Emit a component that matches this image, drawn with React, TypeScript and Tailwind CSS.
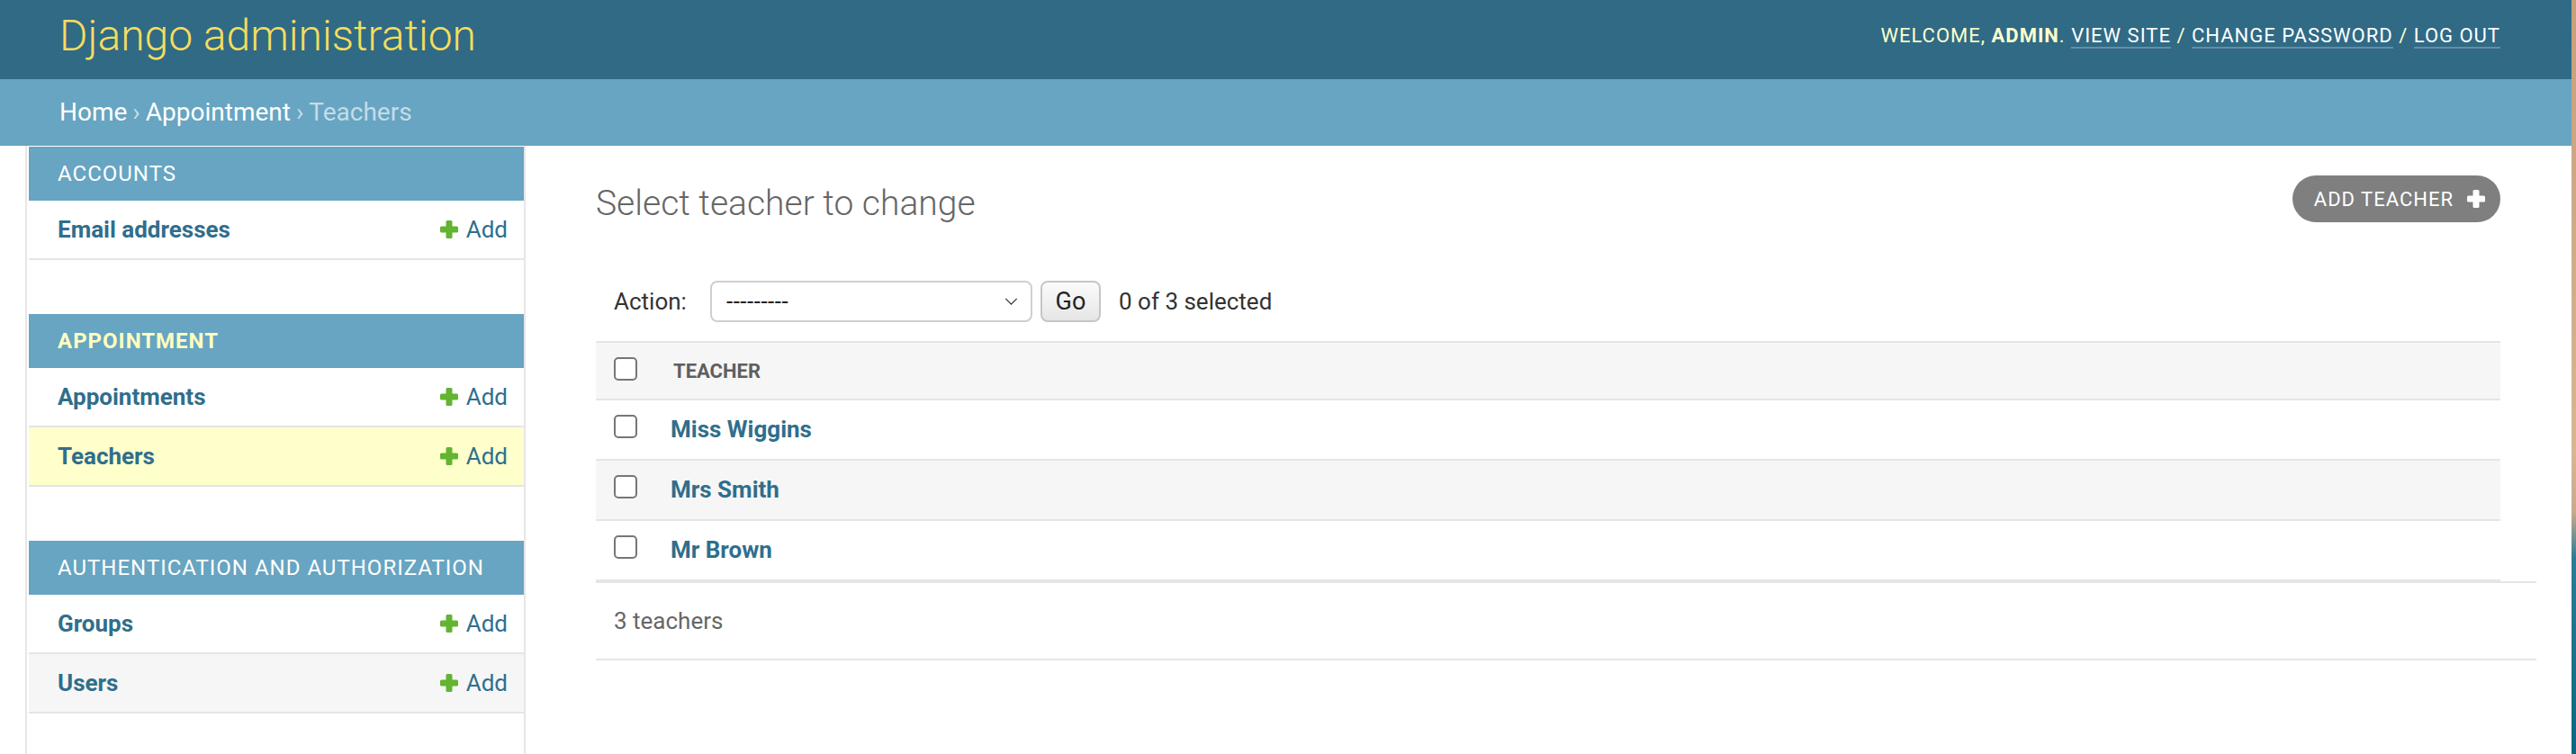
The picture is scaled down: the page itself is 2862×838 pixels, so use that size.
import React from 'react';

interface AdminModel {
  name: string;
  current?: boolean;
}

interface AdminApp {
  name: string;
  current?: boolean;
  models: AdminModel[];
}

const apps: AdminApp[] = [
  { name: 'Accounts', models: [{ name: 'Email addresses' }] },
  {
    name: 'Appointment',
    current: true,
    models: [{ name: 'Appointments' }, { name: 'Teachers', current: true }],
  },
  { name: 'Authentication and Authorization', models: [{ name: 'Groups' }, { name: 'Users' }] },
];

const teachers = ['Miss Wiggins', 'Mrs Smith', 'Mr Brown'];

// chunky plus used by the add links
const PlusIcon: React.FC<{ className?: string }> = ({ className }) => (
  <svg viewBox="0 0 20 20" className={className} fill="currentColor" aria-hidden="true">
    <rect x="6.5" y="0" width="7" height="20" rx="1.5" />
    <rect x="0" y="6.5" width="20" height="7" rx="1.5" />
  </svg>
);

const Checkbox: React.FC<{ className?: string }> = ({ className = '' }) => (
  <span className={`block h-[26px] w-[26px] shrink-0 rounded-[5px] border-2 border-[#767676] bg-white ${className}`} />
);

export default function App() {
  return (
    <div className="flex h-[838px] w-full overflow-hidden bg-white font-[Roboto,'Liberation_Sans',sans-serif] text-[#333]">
      <div className="flex min-w-0 flex-1 flex-col">
        {/* Header */}
        <header className="flex h-[88px] shrink-0 items-center justify-between bg-[#306a85] pb-[8px] pl-[66px] pr-[79px]">
          <h1 className="text-[48px] font-light leading-none text-[#f5dd5d]">Django administration</h1>
          <div className="text-[22px] uppercase leading-none tracking-[1px] text-[#ffffcc]">
            Welcome, <strong className="font-bold">admin</strong>.{' '}
            <span className="border-b-2 border-white/25 text-white">View site</span> /{' '}
            <span className="border-b-2 border-white/25 text-white">Change password</span> /{' '}
            <span className="border-b-2 border-white/25 text-white">Log out</span>
          </div>
        </header>

        {/* Breadcrumbs */}
        <div className="flex h-[74px] shrink-0 items-center bg-[#67a5c2] pl-[66px] text-[28px] text-white">
          <span>Home</span>
          <span className="px-[6px] text-[#c4dce8]">›</span>
          <span>Appointment</span>
          <span className="px-[6px] text-[#c4dce8]">›</span>
          <span className="text-[#c4dce8]">Teachers</span>
        </div>

        <div className="flex flex-1">
          <div className="w-[30px] shrink-0 border-r-2 border-[#e6e6e6]" />

          {/* Sidebar */}
          <aside className="w-[554px] shrink-0 border-r-2 border-[#e6e6e6] pl-[2px] pt-[1px]">
            {apps.map(app => (
              <div key={app.name} className="mb-[60px]">
                <div
                  className={`flex h-[60px] items-center bg-[#67a5c2] pl-[32px] text-[24px] uppercase tracking-[1px] ${
                    app.current ? 'font-bold text-[#ffffc0]' : 'text-white'
                  }`}
                >
                  {app.name}
                </div>
                {app.models.map((model, i) => (
                  <div
                    key={model.name}
                    className={`flex h-[66px] items-center justify-between border-b-2 border-[#e5e5e5] pl-[32px] pr-[18px] ${
                      model.current ? 'bg-[#ffffcc]' : i % 2 === 1 ? 'bg-[#f6f6f6]' : 'bg-white'
                    }`}
                  >
                    <span className="text-[26px] font-bold text-[#306e8c]">{model.name}</span>
                    <span className="flex items-center gap-[9px] text-[26px] text-[#306e8c]">
                      <PlusIcon className="h-[20px] w-[20px] text-[#62b431]" />
                      Add
                    </span>
                  </div>
                ))}
              </div>
            ))}
          </aside>

          {/* Content */}
          <main className="min-w-0 flex-1 pl-[78px] pr-[39px] pt-[33px]">
            <div className="mr-[40px] flex h-[52px] items-start justify-between">
              <h1 className="pt-[5px] text-[39px] font-light leading-[52px] text-[#666]">Select teacher to change</h1>
              <div className="flex h-[52px] items-center gap-[15px] rounded-full bg-[#7f7f7f] pl-[24px] pr-[17px] text-[22px] uppercase tracking-[1px] text-white">
                Add teacher
                <PlusIcon className="h-[20px] w-[20px] text-white" />
              </div>
            </div>

            {/* Actions */}
            <div className="mt-[65px] flex h-[46px] items-center pl-[20px] text-[26px]">
              <span className="w-[107px]">Action:</span>
              <div className="flex h-[46px] w-[358px] items-center justify-between rounded-[8px] border-2 border-[#cfcfcf] bg-white pl-[16px] pr-[14px] text-[26px] text-[#222]">
                <span className="tracking-[0.5px]">---------</span>
                <svg viewBox="0 0 16 9" className="h-[8px] w-[15px]" fill="none" stroke="#333" strokeWidth="1.4">
                  <path d="M1 1l7 7 7-7" />
                </svg>
              </div>
              <div className="ml-[9px] flex h-[46px] w-[67px] items-center justify-center rounded-[8px] border-2 border-[#c6c6c6] bg-gradient-to-b from-[#fbfbfb] to-[#e6e6e6] text-[27px] text-[#222]">
                Go
              </div>
              <span className="ml-[20px]">0 of 3 selected</span>
            </div>

            {/* Results */}
            <div className="mr-[40px] mt-[21px]">
              <div className="flex h-[66px] items-center border-y-2 border-[#e5e5e5] bg-[#f6f6f6] pl-[20px]">
                <Checkbox className="mb-[4px]" />
                <span className="ml-[40px] text-[22px] font-bold uppercase text-[#5f5f5f]">Teacher</span>
              </div>
              {teachers.map((name, i) => (
                <div
                  key={name}
                  className={`flex h-[67px] items-center border-b-2 border-[#e5e5e5] pl-[20px] ${
                    i % 2 === 1 ? 'bg-[#f6f6f6]' : 'bg-white'
                  }`}
                >
                  <Checkbox className="mb-[8px]" />
                  <span className="ml-[37px] text-[26px] font-bold text-[#306e8c]">{name}</span>
                </div>
              ))}
            </div>
            <div className="flex h-[88px] items-center border-y-2 border-[#e5e5e5] pl-[20px] text-[26px] text-[#666]">
              3 teachers
            </div>
          </main>
        </div>
      </div>
      <div className="w-[5px] shrink-0 bg-[linear-gradient(to_bottom,#c79f7c_0%,#d9b591_60%,#c9a98c_68%,#2b7d95_74%,#0b6782_100%)]" />
    </div>
  );
}
